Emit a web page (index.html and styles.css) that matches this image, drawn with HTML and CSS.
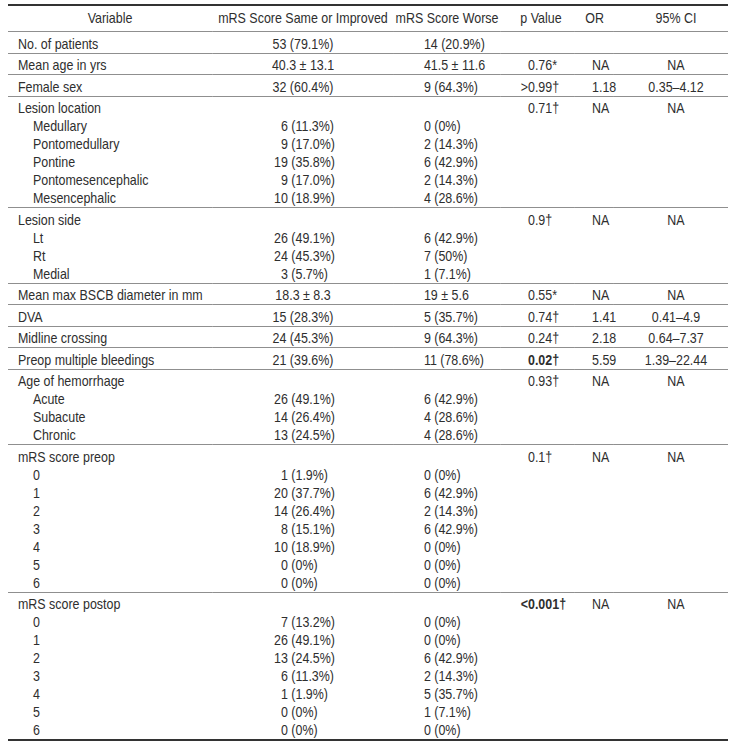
FILE: index.html
```html
<!DOCTYPE html>
<html>
<head>
<meta charset="utf-8">
<link rel="stylesheet" href="styles.css">
</head>
<body>
<div class="frame">
<table class="tbl">
  <colgroup>
    <col class="c1"><col class="c2"><col class="c3"><col class="c4"><col class="c5"><col class="c6">
  </colgroup>
  <thead>
    <tr>
      <th class="h1">Variable</th>
      <th class="h2">mRS Score Same or Improved</th>
      <th class="h3">mRS Score Worse</th>
      <th class="h4">p Value</th>
      <th class="h5">OR</th>
      <th class="h6">95% CI</th>
    </tr>
  </thead>
  <tbody class="grp">
    <tr><td class="v">No. of patients</td><td class="a">53 (79.1%)</td><td class="b">14 (20.9%)</td><td class="p"></td><td class="o"></td><td class="ci"></td></tr>
  </tbody>
  <tbody class="grp">
    <tr><td class="v">Mean age in yrs</td><td class="a">40.3 ± 13.1</td><td class="b">41.5 ± 11.6</td><td class="p">0.76*</td><td class="o">NA</td><td class="ci">NA</td></tr>
  </tbody>
  <tbody class="grp">
    <tr><td class="v">Female sex</td><td class="a">32 (60.4%)</td><td class="b">9 (64.3%)</td><td class="p"><span class="sign">&gt;</span>0.99†</td><td class="o">1.18</td><td class="ci">0.35–4.12</td></tr>
  </tbody>
  <tbody class="grp">
    <tr><td class="v">Lesion location</td><td class="a"></td><td class="b"></td><td class="p">0.71†</td><td class="o">NA</td><td class="ci">NA</td></tr>
    <tr><td class="v sub">Medullary</td><td class="as">&#8199;6 (11.3%)</td><td class="b">0 (0%)</td><td class="p"></td><td class="o"></td><td class="ci"></td></tr>
    <tr><td class="v sub">Pontomedullary</td><td class="as">&#8199;9 (17.0%)</td><td class="b">2 (14.3%)</td><td class="p"></td><td class="o"></td><td class="ci"></td></tr>
    <tr><td class="v sub">Pontine</td><td class="as">19 (35.8%)</td><td class="b">6 (42.9%)</td><td class="p"></td><td class="o"></td><td class="ci"></td></tr>
    <tr><td class="v sub">Pontomesencephalic</td><td class="as">&#8199;9 (17.0%)</td><td class="b">2 (14.3%)</td><td class="p"></td><td class="o"></td><td class="ci"></td></tr>
    <tr><td class="v sub">Mesencephalic</td><td class="as">10 (18.9%)</td><td class="b">4 (28.6%)</td><td class="p"></td><td class="o"></td><td class="ci"></td></tr>
  </tbody>
  <tbody class="grp">
    <tr><td class="v">Lesion side</td><td class="a"></td><td class="b"></td><td class="p">0.9†</td><td class="o">NA</td><td class="ci">NA</td></tr>
    <tr><td class="v sub">Lt</td><td class="as">26 (49.1%)</td><td class="b">6 (42.9%)</td><td class="p"></td><td class="o"></td><td class="ci"></td></tr>
    <tr><td class="v sub">Rt</td><td class="as">24 (45.3%)</td><td class="b">7 (50%)</td><td class="p"></td><td class="o"></td><td class="ci"></td></tr>
    <tr><td class="v sub">Medial</td><td class="as">&#8199;3 (5.7%)</td><td class="b">1 (7.1%)</td><td class="p"></td><td class="o"></td><td class="ci"></td></tr>
  </tbody>
  <tbody class="grp">
    <tr><td class="v">Mean max BSCB diameter in mm</td><td class="a">18.3 ± 8.3</td><td class="b">19 ± 5.6</td><td class="p">0.55*</td><td class="o">NA</td><td class="ci">NA</td></tr>
  </tbody>
  <tbody class="grp">
    <tr><td class="v">DVA</td><td class="a">15 (28.3%)</td><td class="b">5 (35.7%)</td><td class="p">0.74†</td><td class="o">1.41</td><td class="ci">0.41–4.9</td></tr>
  </tbody>
  <tbody class="grp">
    <tr><td class="v">Midline crossing</td><td class="a">24 (45.3%)</td><td class="b">9 (64.3%)</td><td class="p">0.24†</td><td class="o">2.18</td><td class="ci">0.64–7.37</td></tr>
  </tbody>
  <tbody class="grp">
    <tr><td class="v">Preop multiple bleedings</td><td class="a">21 (39.6%)</td><td class="b">11 (78.6%)</td><td class="p"><strong>0.02†</strong></td><td class="o">5.59</td><td class="ci">1.39–22.44</td></tr>
  </tbody>
  <tbody class="grp">
    <tr><td class="v">Age of hemorrhage</td><td class="a"></td><td class="b"></td><td class="p">0.93†</td><td class="o">NA</td><td class="ci">NA</td></tr>
    <tr><td class="v sub">Acute</td><td class="as">26 (49.1%)</td><td class="b">6 (42.9%)</td><td class="p"></td><td class="o"></td><td class="ci"></td></tr>
    <tr><td class="v sub">Subacute</td><td class="as">14 (26.4%)</td><td class="b">4 (28.6%)</td><td class="p"></td><td class="o"></td><td class="ci"></td></tr>
    <tr><td class="v sub">Chronic</td><td class="as">13 (24.5%)</td><td class="b">4 (28.6%)</td><td class="p"></td><td class="o"></td><td class="ci"></td></tr>
  </tbody>
  <tbody class="grp">
    <tr><td class="v">mRS score preop</td><td class="a"></td><td class="b"></td><td class="p">0.1†</td><td class="o">NA</td><td class="ci">NA</td></tr>
    <tr><td class="v sub">0</td><td class="as">&#8199;1 (1.9%)</td><td class="b">0 (0%)</td><td class="p"></td><td class="o"></td><td class="ci"></td></tr>
    <tr><td class="v sub">1</td><td class="as">20 (37.7%)</td><td class="b">6 (42.9%)</td><td class="p"></td><td class="o"></td><td class="ci"></td></tr>
    <tr><td class="v sub">2</td><td class="as">14 (26.4%)</td><td class="b">2 (14.3%)</td><td class="p"></td><td class="o"></td><td class="ci"></td></tr>
    <tr><td class="v sub">3</td><td class="as">&#8199;8 (15.1%)</td><td class="b">6 (42.9%)</td><td class="p"></td><td class="o"></td><td class="ci"></td></tr>
    <tr><td class="v sub">4</td><td class="as">10 (18.9%)</td><td class="b">0 (0%)</td><td class="p"></td><td class="o"></td><td class="ci"></td></tr>
    <tr><td class="v sub">5</td><td class="as">&#8199;0 (0%)</td><td class="b">0 (0%)</td><td class="p"></td><td class="o"></td><td class="ci"></td></tr>
    <tr><td class="v sub">6</td><td class="as">&#8199;0 (0%)</td><td class="b">0 (0%)</td><td class="p"></td><td class="o"></td><td class="ci"></td></tr>
  </tbody>
  <tbody class="grp last">
    <tr><td class="v">mRS score postop</td><td class="a"></td><td class="b"></td><td class="p"><strong><span class="sign">&lt;</span>0.001†</strong></td><td class="o">NA</td><td class="ci">NA</td></tr>
    <tr><td class="v sub">0</td><td class="as">&#8199;7 (13.2%)</td><td class="b">0 (0%)</td><td class="p"></td><td class="o"></td><td class="ci"></td></tr>
    <tr><td class="v sub">1</td><td class="as">26 (49.1%)</td><td class="b">0 (0%)</td><td class="p"></td><td class="o"></td><td class="ci"></td></tr>
    <tr><td class="v sub">2</td><td class="as">13 (24.5%)</td><td class="b">6 (42.9%)</td><td class="p"></td><td class="o"></td><td class="ci"></td></tr>
    <tr><td class="v sub">3</td><td class="as">&#8199;6 (11.3%)</td><td class="b">2 (14.3%)</td><td class="p"></td><td class="o"></td><td class="ci"></td></tr>
    <tr><td class="v sub">4</td><td class="as">&#8199;1 (1.9%)</td><td class="b">5 (35.7%)</td><td class="p"></td><td class="o"></td><td class="ci"></td></tr>
    <tr><td class="v sub">5</td><td class="as">&#8199;0 (0%)</td><td class="b">1 (7.1%)</td><td class="p"></td><td class="o"></td><td class="ci"></td></tr>
    <tr><td class="v sub">6</td><td class="as">&#8199;0 (0%)</td><td class="b">0 (0%)</td><td class="p"></td><td class="o"></td><td class="ci"></td></tr>
  </tbody>
</table>
</div>
</body>
</html>
```

FILE: styles.css
```css
html, body {
  background: #ffffff;
}
body {
  margin: 4px 10px 0 8px;
  font-family: "Liberation Sans", Arial, sans-serif;
  font-size: 15px;
  color: #2e2e2e;
}
/* The reference uses a condensed sans; emulate it by horizontally
   condensing the whole table (layout widths are divided by 0.83). */
.frame {
  width: 720px;
  overflow: hidden;
}
.tbl {
  width: 867.5px;
  table-layout: fixed;
  border-collapse: separate;
  border-spacing: 0;
  border-top: 2px solid #333333;
  border-bottom: 2px solid #333333;
  transform: scaleX(0.83);
  transform-origin: 0 0;
}
.c1 { width: 245.8px; }
.c2 { width: 219.3px; }
.c3 { width: 127.7px; }
.c4 { width: 90.4px; }
.c5 { width: 47px; }
.c6 { width: 137.3px; }

th, td {
  padding: 0;
  line-height: 18px;
  white-space: nowrap;
  vertical-align: top;
}
th {
  font-weight: normal;
  text-align: center;
  padding-top: 3px;
  padding-bottom: 4px;
}
.h4 { padding-left: 8.4px; }
.h6 { padding-left: 12px; }

.grp tr:first-child td {
  border-top: 1px solid #8f8f8f;
  padding-top: 2.5px;
}

.v { text-align: left; padding-left: 12px; }
.v.sub { padding-left: 30px; }
.a { text-align: center; }
.as { text-align: left; padding-left: 74.7px; }
.b { text-align: left; padding-left: 36px; }
.p { text-align: left; padding-left: 33.7px; }
.o { text-align: left; padding-left: 20.5px; }
.ci { text-align: center; padding-left: 12px; }
.sign { display: inline-block; margin-left: -0.584em; }
strong { font-weight: bold; }
```
